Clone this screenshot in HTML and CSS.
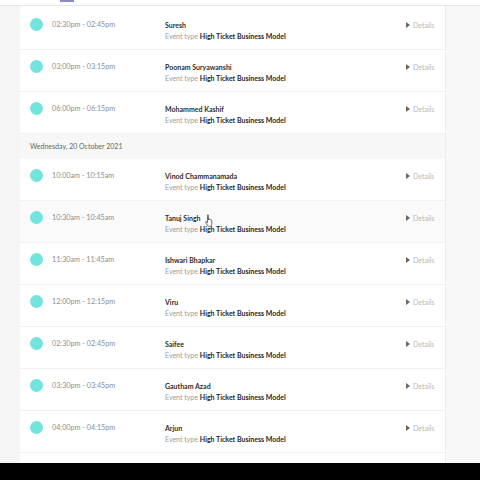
FILE: index.html
```html
<!DOCTYPE html>
<html>
<head>
<meta charset="utf-8">
<link rel="stylesheet" href="styles.css">
</head>
<body>
<div class="topbar"><span class="topmark"></span></div>
<div class="layout">
  <div class="gutter-left"></div>
  <main class="card">
    <div class="row">
      <span class="dot"></span><span class="time">02:30pm - 02:45pm</span>
      <div class="info"><div class="name">Suresh</div><div class="etype">Event type <b>High Ticket Business Model</b></div></div>
      <span class="details"><span class="tri"></span>Details</span>
    </div>
    <div class="row">
      <span class="dot"></span><span class="time">03:00pm - 03:15pm</span>
      <div class="info"><div class="name">Poonam Suryawanshi</div><div class="etype">Event type <b>High Ticket Business Model</b></div></div>
      <span class="details"><span class="tri"></span>Details</span>
    </div>
    <div class="row">
      <span class="dot"></span><span class="time">06:00pm - 06:15pm</span>
      <div class="info"><div class="name">Mohammed Kashif</div><div class="etype">Event type <b>High Ticket Business Model</b></div></div>
      <span class="details"><span class="tri"></span>Details</span>
    </div>
    <div class="date">Wednesday, 20 October 2021</div>
    <div class="row">
      <span class="dot"></span><span class="time">10:00am - 10:15am</span>
      <div class="info"><div class="name">Vinod Chammanamada</div><div class="etype">Event type <b>High Ticket Business Model</b></div></div>
      <span class="details"><span class="tri"></span>Details</span>
    </div>
    <div class="row hover">
      <span class="dot"></span><span class="time">10:30am - 10:45am</span>
      <div class="info"><div class="name">Tanuj Singh</div><div class="etype">Event type <b>High Ticket Business Model</b></div></div>
      <span class="details"><span class="tri"></span>Details</span>
      <svg class="cursor" width="9" height="13" viewBox="0 0 9 13"><path d="M2.5 1.2c0-.6.9-.6.9 0V6l.3-1.2c.6-.3 1 0 1 .5l.1.3c.5-.3 1 0 1 .4v.3c.5-.3 1 0 1 .5v3.5c0 1.200-.8 2-1.8 2H3.8c-.7 0-1.100-.4-1.500-1L.7 8.3c-.3-.5.3-1 .8-.6l1 1.100z" fill="#fff" stroke="#333" stroke-width=".7" stroke-linejoin="round"/></svg>
    </div>
    <div class="row">
      <span class="dot"></span><span class="time">11:30am - 11:45am</span>
      <div class="info"><div class="name">Ishwari Bhapkar</div><div class="etype">Event type <b>High Ticket Business Model</b></div></div>
      <span class="details"><span class="tri"></span>Details</span>
    </div>
    <div class="row">
      <span class="dot"></span><span class="time">12:00pm - 12:15pm</span>
      <div class="info"><div class="name">Viru</div><div class="etype">Event type <b>High Ticket Business Model</b></div></div>
      <span class="details"><span class="tri"></span>Details</span>
    </div>
    <div class="row">
      <span class="dot"></span><span class="time">02:30pm - 02:45pm</span>
      <div class="info"><div class="name">Saifee</div><div class="etype">Event type <b>High Ticket Business Model</b></div></div>
      <span class="details"><span class="tri"></span>Details</span>
    </div>
    <div class="row">
      <span class="dot"></span><span class="time">03:30pm - 03:45pm</span>
      <div class="info"><div class="name">Gautham Azad</div><div class="etype">Event type <b>High Ticket Business Model</b></div></div>
      <span class="details"><span class="tri"></span>Details</span>
    </div>
    <div class="row">
      <span class="dot"></span><span class="time">04:00pm - 04:15pm</span>
      <div class="info"><div class="name">Arjun</div><div class="etype">Event type <b>High Ticket Business Model</b></div></div>
      <span class="details"><span class="tri"></span>Details</span>
    </div>
    <div class="row"></div>
  </main>
  <div class="gutter-right"></div>
</div>
<div class="bottombar"></div>
</body>
</html>
```
FILE: styles.css
```css
* { box-sizing: border-box; }
html, body { margin: 0; padding: 0; }
body {
  width: 480px;
  height: 480px;
  overflow: hidden;
  background: #f6f6f6;
  font-family: Lato, "Open Sans", sans-serif;
  display: flex;
  flex-direction: column;
}
.topbar {
  height: 6px;
  flex: none;
  background: #fff;
  border-bottom: 1px solid #e6e6e6;
  position: relative;
}
.topmark {
  position: absolute;
  left: 60px;
  top: 0;
  width: 14px;
  height: 2px;
  background: #3b3f9e;
  opacity: 0.6;
}
.layout {
  flex: 1;
  display: flex;
  min-height: 0;
  overflow: hidden;
}
.gutter-left { width: 20px; flex: none; background: #f5f5f5; }
.gutter-right { flex: 1; background: #f8f8f8; border-left: 1px solid #ececec; }
.card {
  width: 425px;
  flex: none;
  background: #fff;
  padding-top: 2px;
}
.row {
  height: 42px;
  display: flex;
  align-items: flex-start;
  padding: 10px 0 0 10px;
  border-bottom: 1px solid #f1f1f1;
  background: #fff;
  position: relative;
}
.row.hover { background: #fafafa; }
.dot {
  width: 13px;
  height: 13px;
  border-radius: 50%;
  background: #72e3dd;
  flex: none;
}
.time {
  margin-left: 9px;
  width: 113px;
  flex: none;
  font-size: 7.2px;
  color: #8e8e8e;
  line-height: 14px;
}
.info { flex: 1; }
.name {
  font-size: 7px;
  font-weight: 700;
  color: #2e2e2e;
  line-height: 14px;
}
.etype {
  font-size: 7px;
  color: #9a9a9a;
  line-height: 9px;
}
.etype b { color: #262626; font-weight: 700; }
.details {
  width: 39px;
  flex: none;
  font-size: 7px;
  color: #b8b8b8;
  line-height: 14px;
  display: flex;
  align-items: center;
}
.tri {
  width: 0;
  height: 0;
  border-top: 3px solid transparent;
  border-bottom: 3px solid transparent;
  border-left: 4px solid #666;
  margin-right: 3px;
}
.cursor {
  position: absolute;
  left: 185px;
  top: 13px;
}
.date {
  height: 25px;
  background: #f7f7f7;
  font-size: 7px;
  color: #666;
  padding-left: 10px;
  line-height: 25px;
}
.bottombar {
  height: 17px;
  flex: none;
  background: #000;
}
```
